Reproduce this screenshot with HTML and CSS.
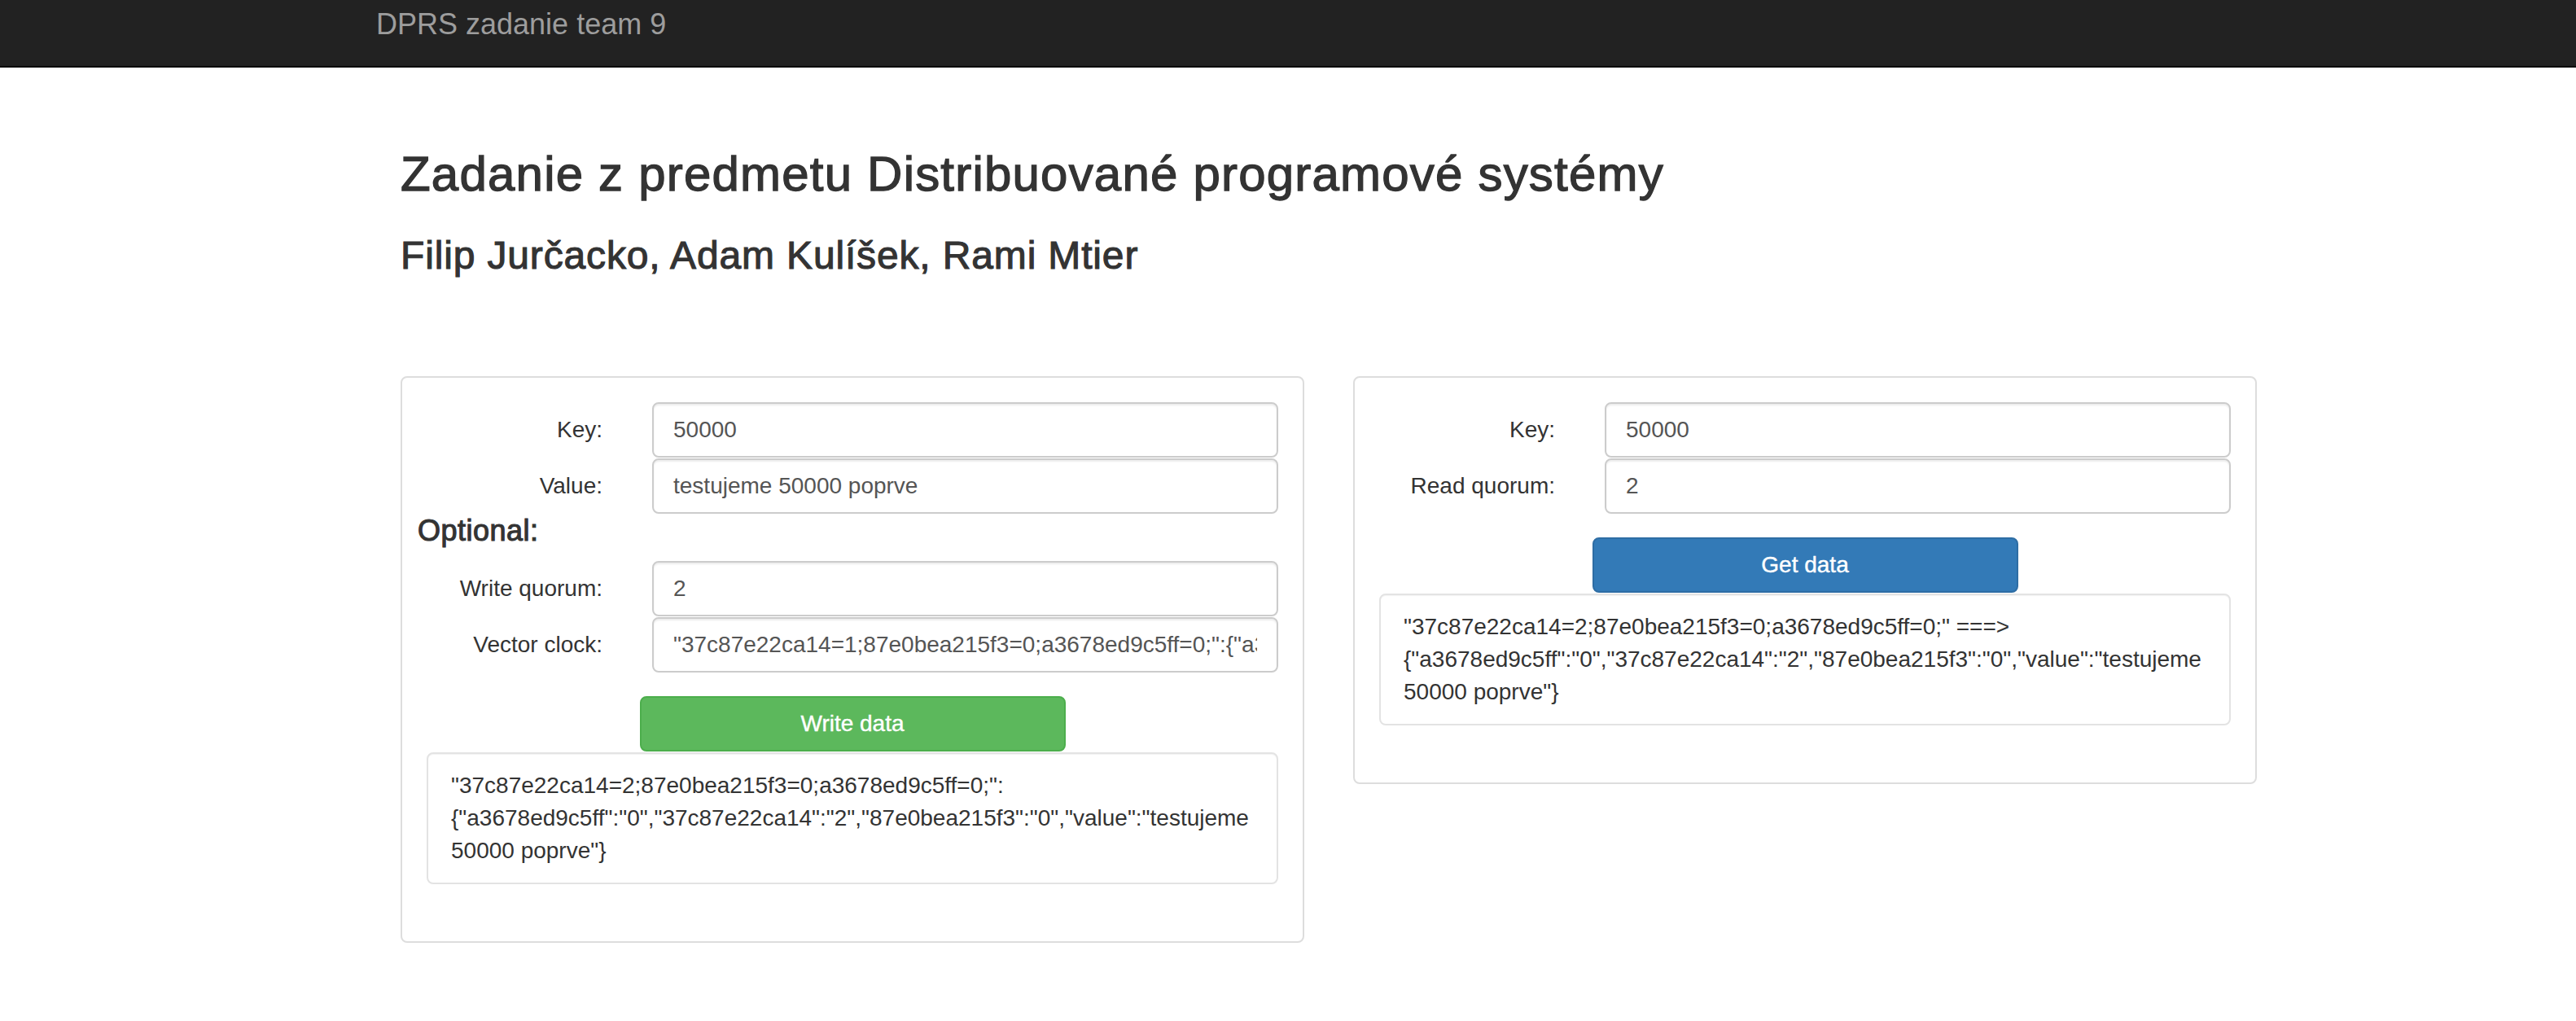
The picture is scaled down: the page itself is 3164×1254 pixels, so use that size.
FILE: index.html
```html
<!DOCTYPE html>
<html lang="sk">
<head>
<meta charset="utf-8">
<title>DPRS zadanie team 9</title>
<link rel="stylesheet" href="styles.css">
</head>
<body>
<nav class="navbar">
  <div class="navbar-inner">
    <a class="brand" href="#">DPRS zadanie team 9</a>
  </div>
</nav>
<main class="container">
  <h2 class="title">Zadanie z predmetu Distribuované programové systémy</h2>
  <h3 class="authors">Filip Jurčacko, Adam Kulíšek, Rami Mtier</h3>
  <div class="panels">
    <section class="panel">
      <div class="form-group">
        <label class="control-label">Key:</label>
        <input class="form-control" type="text" value="50000">
      </div>
      <div class="form-group">
        <label class="control-label">Value:</label>
        <input class="form-control" type="text" value="testujeme 50000 poprve">
      </div>
      <h4 class="optional">Optional:</h4>
      <div class="form-group">
        <label class="control-label">Write quorum:</label>
        <input class="form-control" type="text" value="2">
      </div>
      <div class="form-group">
        <label class="control-label">Vector clock:</label>
        <input class="form-control" type="text" value='"37c87e22ca14=1;87e0bea215f3=0;a3678ed9c5ff=0;":{"a3678ed9c5ff":"0","37c87e22ca14":"1","87e0bea215f3":"0","value":"testujeme 50000"}'>
      </div>
      <button class="btn btn-success" type="button">Write data</button>
      <div class="well">"37c87e22ca14=2;87e0bea215f3=0;a3678ed9c5ff=0;":<br>{"a3678ed9c5ff":"0","37c87e22ca14":"2","87e0bea215f3":"0","value":"testujeme 50000 poprve"}</div>
    </section>
    <section class="panel">
      <div class="form-group">
        <label class="control-label">Key:</label>
        <input class="form-control" type="text" value="50000">
      </div>
      <div class="form-group">
        <label class="control-label">Read quorum:</label>
        <input class="form-control" type="text" value="2">
      </div>
      <button class="btn btn-primary" type="button">Get data</button>
      <div class="well">"37c87e22ca14=2;87e0bea215f3=0;a3678ed9c5ff=0;" ===&gt;<br>{"a3678ed9c5ff":"0","37c87e22ca14":"2","87e0bea215f3":"0","value":"testujeme 50000 poprve"}</div>
    </section>
  </div>
</main>
</body>
</html>
```

FILE: styles.css
```css
* { box-sizing: border-box; }

html, body {
  margin: 0;
  padding: 0;
  background: #fff;
}

body {
  font-family: "Liberation Sans", Arial, Helvetica, sans-serif;
  font-size: 28px;
  line-height: 40px;
  color: #333;
}

.navbar {
  background: #222;
  border-bottom: 2px solid #080808;
  height: 83px;
}

.navbar-inner {
  margin-left: 462px;
  padding-top: 10px;
}

.brand {
  display: inline-block;
  font-size: 36px;
  line-height: 40px;
  color: #9d9d9d;
  text-decoration: none;
}

.container {
  width: 2280px;
  margin-left: 492px;
  padding-top: 98px;
}

.title {
  margin: 0 0 40px;
  font-size: 60px;
  line-height: 66px;
  font-weight: 500;
  letter-spacing: 1.2px;
  -webkit-text-stroke: 1.3px #333;
}

.authors {
  margin: 0;
  font-size: 48px;
  line-height: 53px;
  font-weight: 500;
  letter-spacing: 0.85px;
  -webkit-text-stroke: 1.1px #333;
}

.panels {
  display: flex;
  align-items: flex-start;
  gap: 60px;
  margin-top: 122px;
}

.panel {
  flex: 1 1 0;
  border: 2px solid #ddd;
  border-radius: 8px;
  padding: 30px;
  background: #fff;
  display: flex;
  flex-direction: column;
}

.form-group {
  display: grid;
  grid-template-columns: 216px 1fr;
  column-gap: 61px;
  align-items: center;
  margin-bottom: 1px;
}

.control-label {
  text-align: right;
  font-weight: 400;
  color: #333;
}

.form-control {
  display: block;
  width: 100%;
  height: 68px;
  padding: 12px 24px;
  font-family: "Liberation Sans", Arial, Helvetica, sans-serif;
  font-size: 28px;
  line-height: 40px;
  color: #555;
  background: #fff;
  border: 2px solid #ccc;
  border-radius: 8px;
  box-shadow: inset 0 2px 2px rgba(0, 0, 0, 0.075);
  outline: none;
}

.optional {
  margin: 0 0 17px -11px;
  font-size: 36px;
  line-height: 40px;
  font-weight: 500;
  letter-spacing: 0.5px;
  -webkit-text-stroke: 1.1px #333;
}

.btn {
  display: block;
  width: 50%;
  height: 68px;
  margin: 28px auto 0;
  padding: 12px 24px;
  font-family: "Liberation Sans", Arial, Helvetica, sans-serif;
  font-size: 28px;
  line-height: 40px;
  color: #fff;
  border: 2px solid transparent;
  border-radius: 8px;
  cursor: pointer;
  -webkit-text-stroke: 0.4px #fff;
}

.btn-success {
  background: #5cb85c;
  border-color: #4cae4c;
}

.btn-primary {
  background: #337ab7;
  border-color: #2e6da4;
}

.well {
  margin: 1px 0 40px;
  padding: 19px 28px;
  border: 2px solid #e3e3e3;
  border-radius: 8px;
  background: #fff;
  box-shadow: inset 0 1px 1px rgba(0, 0, 0, 0.05);
  color: #333;
}
```
